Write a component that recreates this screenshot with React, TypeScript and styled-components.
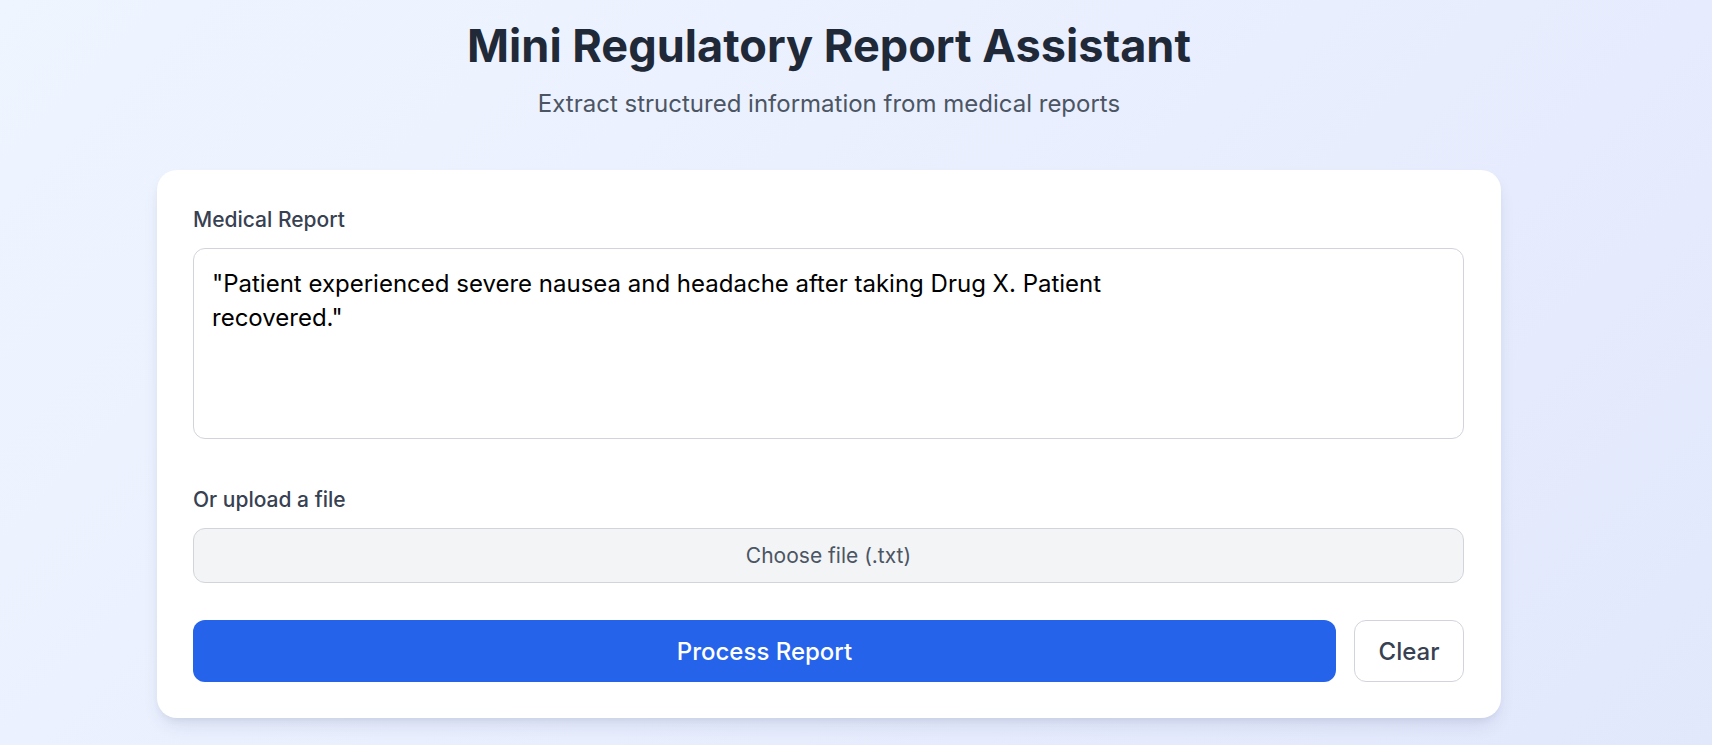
import React, { useState } from "react";
import styled, { createGlobalStyle } from "styled-components";

const GlobalStyle = createGlobalStyle`
  * { box-sizing: border-box; }
  html, body { margin: 0; padding: 0; }
  body {
    font-family: Inter, "Noto Sans", "Liberation Sans", sans-serif;
    min-height: 745px;
    background: linear-gradient(135deg, #eff5ff 0%, #e2e8fc 100%);
  }
`;

const Page = styled.main`
  min-height: 745px;
  padding: 21px 54px 40px 0;
  display: flex;
  flex-direction: column;
  align-items: center;
`;

const Header = styled.header`
  display: flex;
  flex-direction: column;
  align-items: center;
  margin-bottom: 50px;
`;

const Title = styled.h1`
  margin: 0 0 17px;
  font-size: 45.1px;
  line-height: 50px;
  font-weight: 700;
  color: #1f2937;
`;

const Subtitle = styled.p`
  margin: 0;
  font-size: 24px;
  line-height: 32px;
  color: #4b5563;
`;

const Card = styled.section`
  width: 1344px;
  background: #ffffff;
  border-radius: 20px;
  padding: 36px 37px 36px 36px;
  box-shadow: 0 10px 18px -4px rgba(40, 55, 110, 0.12),
    0 4px 8px -4px rgba(40, 55, 110, 0.1);
  display: flex;
  flex-direction: column;
`;

const Label = styled.label`
  display: block;
  font-size: 21px;
  line-height: 28px;
  font-weight: 500;
  color: #374151;
  margin-bottom: 14px;
`;

const TextArea = styled.textarea`
  display: block;
  width: 100%;
  height: 191px;
  resize: none;
  border: 1px solid #d1d5db;
  border-radius: 12px;
  padding: 18px 18px;
  font-family: Inter, "Noto Sans", "Liberation Sans", sans-serif;
  font-size: 24px;
  line-height: 34px;
  color: #000000;
  background: #ffffff;
  outline: none;
  margin-bottom: 47px;
`;

const FileBox = styled.label`
  display: flex;
  align-items: center;
  justify-content: center;
  height: 55px;
  border: 1px solid #d1d5db;
  border-radius: 12px;
  background: #f3f4f6;
  color: #4b5563;
  font-size: 21px;
  cursor: pointer;
  margin-bottom: 37px;
`;

const HiddenInput = styled.input`
  display: none;
`;

const Actions = styled.div`
  display: flex;
  gap: 18px;
`;

const Button = styled.button<{ $primary?: boolean }>`
  height: 62px;
  border-radius: 12px;
  font-family: Inter, "Noto Sans", "Liberation Sans", sans-serif;
  font-size: 24px;
  font-weight: 500;
  cursor: pointer;
  ${(p) =>
    p.$primary
      ? `
    flex: 1;
    background: #2563eb;
    color: #ffffff;
    border: none;
  `
      : `
    width: 110px;
    background: #ffffff;
    color: #374151;
    border: 1px solid #d1d5db;
  `}
`;

export default function App() {
  const [text, setText] = useState(
    '"Patient experienced severe nausea and headache after taking Drug X. Patient\nrecovered."'
  );
  return (
    <>
      <GlobalStyle />
      <Page>
        <Header>
          <Title>Mini Regulatory Report Assistant</Title>
          <Subtitle>Extract structured information from medical reports</Subtitle>
        </Header>
        <Card>
          <Label htmlFor="report">Medical Report</Label>
          <TextArea
            id="report"
            value={text}
            onChange={(e) => setText(e.target.value)}
          />
          <Label>Or upload a file</Label>
          <FileBox>
            Choose file (.txt)
            <HiddenInput type="file" accept=".txt" />
          </FileBox>
          <Actions>
            <Button $primary>Process Report</Button>
            <Button onClick={() => setText("")}>Clear</Button>
          </Actions>
        </Card>
      </Page>
    </>
  );
}
